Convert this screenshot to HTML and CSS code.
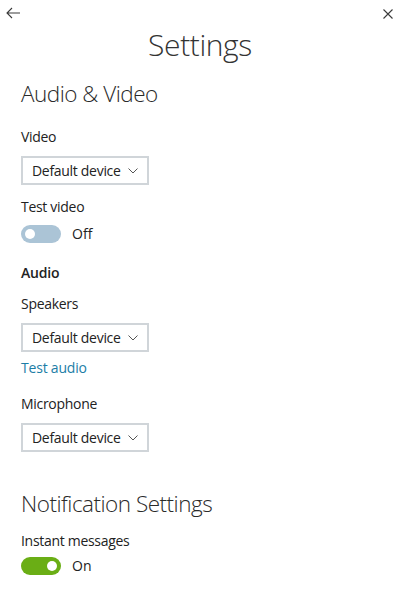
FILE: index.html
```html
<!DOCTYPE html>
<html lang="en">
<head>
<meta charset="utf-8">
<title>Settings</title>
<link rel="stylesheet" href="styles.css">
</head>
<body>
<div class="page">
  <div class="topbar">
    <svg class="icon-back" width="16" height="12" viewBox="0 0 16 12" aria-label="Back">
      <path d="M1 6 H14 M6 1 L1 6 L6 11" fill="none" stroke="#3a3a3a" stroke-width="1.1"/>
    </svg>
    <svg class="icon-close" width="10" height="10" viewBox="0 0 10 10" aria-label="Close">
      <path d="M0.5 0.5 L9.5 9.5 M9.5 0.5 L0.5 9.5" fill="none" stroke="#3a3a3a" stroke-width="1.1"/>
    </svg>
  </div>
  <h1 class="title">Settings</h1>

  <div class="content">
    <h2 class="section-title">Audio &amp; Video</h2>

    <div class="label label-first">Video</div>
    <div class="select">
      <span>Default device</span>
      <svg class="chevron" width="10" height="6" viewBox="0 0 10 6"><path d="M0.5 0.5 L5 5 L9.5 0.5" fill="none" stroke="#555" stroke-width="1"/></svg>
    </div>

    <div class="label label-test">Test video</div>
    <div class="toggle-row">
      <span class="toggle toggle-off"><span class="knob"></span></span>
      <span class="toggle-text">Off</span>
    </div>

    <div class="group-title">Audio</div>
    <div class="label label-after-group">Speakers</div>
    <div class="select">
      <span>Default device</span>
      <svg class="chevron" width="10" height="6" viewBox="0 0 10 6"><path d="M0.5 0.5 L5 5 L9.5 0.5" fill="none" stroke="#555" stroke-width="1"/></svg>
    </div>
    <a class="link" href="#">Test audio</a>

    <div class="label label-mic">Microphone</div>
    <div class="select">
      <span>Default device</span>
      <svg class="chevron" width="10" height="6" viewBox="0 0 10 6"><path d="M0.5 0.5 L5 5 L9.5 0.5" fill="none" stroke="#555" stroke-width="1"/></svg>
    </div>

    <h2 class="section-title section-second">Notification Settings</h2>
    <div class="label label-instant">Instant messages</div>
    <div class="toggle-row toggle-row-tight">
      <span class="toggle toggle-on"><span class="knob"></span></span>
      <span class="toggle-text">On</span>
    </div>
  </div>
</div>
</body>
</html>
```
FILE: styles.css
```css
html, body {
  margin: 0;
  padding: 0;
  background: #ffffff;
}

body {
  font-family: "Open Sans", "Noto Sans", "Liberation Sans", sans-serif;
  color: #222222;
  font-size: 14px;
}

.page {
  width: 400px;
}

.topbar {
  height: 25px;
  display: flex;
  justify-content: space-between;
  align-items: flex-start;
  padding: 0 7px 0 6px;
  box-sizing: border-box;
}

.icon-back {
  margin-top: 7px;
}

.icon-close {
  margin-top: 9px;
}

.title {
  margin: 0;
  font-size: 30px;
  line-height: 40px;
  font-weight: 300;
  text-align: center;
  color: #333333;
  letter-spacing: -0.4px;
}

.content {
  padding: 0 21px;
}

.section-title {
  margin: 13px 0 0;
  font-size: 22.5px;
  line-height: 32px;
  font-weight: 300;
  color: #2a2a2a;
  letter-spacing: -0.5px;
}

.section-second {
  margin-top: 36px;
}

.label {
  line-height: 20px;
  letter-spacing: -0.3px;
}

.label-first { margin-top: 17px; }
.label-test { margin-top: 12px; }
.label-after-group { margin-top: 11px; }
.label-mic { margin-top: 16px; }
.label-instant { margin-top: 11px; }

.group-title {
  margin-top: 20px;
  line-height: 20px;
  font-weight: 600;
  letter-spacing: -0.2px;
}

.select {
  margin-top: 9px;
  width: 128px;
  height: 29px;
  box-sizing: border-box;
  border: 2px solid #d0d5d9;
  display: flex;
  align-items: center;
  justify-content: space-between;
  padding: 0 9px 0 9px;
  letter-spacing: -0.3px;
}

.chevron {
  display: block;
}

.link {
  display: block;
  margin-top: 6px;
  line-height: 20px;
  color: #1c7da6;
  text-decoration: none;
  letter-spacing: -0.2px;
}

.toggle-row {
  margin-top: 8px;
  display: flex;
  align-items: center;
  gap: 11px;
  height: 18px;
}

.toggle-row-tight {
  margin-top: 6px;
}

.toggle {
  width: 40px;
  height: 18px;
  border-radius: 9px;
  display: flex;
  align-items: center;
  padding: 0 4px;
  box-sizing: border-box;
}

.toggle-off {
  background: #abc4d6;
  justify-content: flex-start;
}

.toggle-on {
  background: #6aae15;
  justify-content: flex-end;
}

.knob {
  width: 10px;
  height: 10px;
  border-radius: 50%;
  background: #ffffff;
}

.toggle-text {
  line-height: 20px;
}
```
